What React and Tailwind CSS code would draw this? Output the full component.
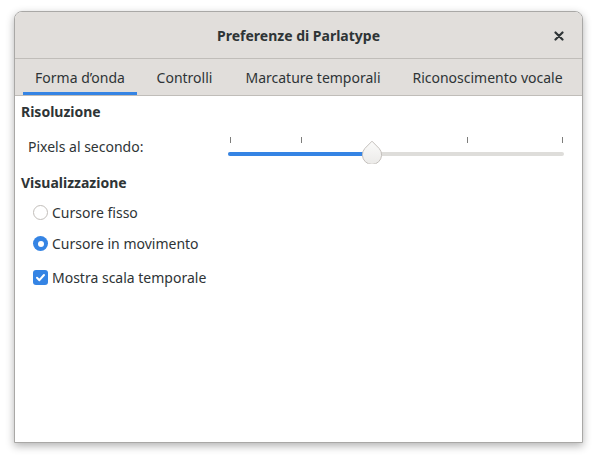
import React from "react";

const font = { fontFamily: '"Noto Sans", "Open Sans", sans-serif' };

function Tab({ label, width, active }) {
  return (
    <div
      className={`relative flex h-full items-center justify-center text-[14px] text-[#2e3436] ${width}`}
    >
      <span className="mt-[1px]">{label}</span>
      {active && (
        <div className="absolute bottom-0 left-0 right-0 h-[3px] bg-[#3584e4]" />
      )}
    </div>
  );
}

function Slider() {
  const ticks = [2, 73, 239, 334];
  return (
    <div className="relative h-[32px] w-[336px]">
      {ticks.map((t) => (
        <div
          key={t}
          className="absolute top-[7px] h-[6px] w-[1px] bg-[#7d7d7b]"
          style={{ left: t }}
        />
      ))}
      <div className="absolute left-0 right-0 top-[22px] h-[4px] rounded-full bg-[#deddda]" />
      <div className="absolute left-0 top-[22px] h-[4px] w-[146px] rounded-full bg-[#3584e4]" />
      <svg
        className="absolute left-[133px] top-[10px]"
        width="22"
        height="24"
        viewBox="0 0 22 24"
      >
        <defs>
          <linearGradient id="kg" x1="0" y1="0" x2="0" y2="1">
            <stop offset="0" stopColor="#fbfbfa" />
            <stop offset="1" stopColor="#ebeae8" />
          </linearGradient>
        </defs>
        <path
          d="M11 1.2 L18.3 8.6 A9.6 9.6 0 1 1 3.7 8.6 Z"
          fill="url(#kg)"
          stroke="#c3bfbb"
          strokeWidth="1"
          strokeLinejoin="round"
        />
      </svg>
    </div>
  );
}

export default function App() {
  return (
    <div className="h-[459px] w-[597px] bg-white pl-[14px] pt-[11px]" style={font}>
      <div className="flex h-[432px] w-[569px] flex-col overflow-hidden rounded-t-[8px] border border-[#a9a8a6] bg-white shadow-[0_3px_9px_rgba(0,0,0,0.3)]">
        <div className="relative flex h-[47px] shrink-0 items-center justify-center border-b border-[#c0bdb9] bg-[#e1dedb]">
          <span className="text-[14px] font-bold text-[#2e3436]">Preferenze di Parlatype</span>
          <svg
            className="absolute right-[18px] top-[19px]"
            width="10"
            height="10"
            viewBox="0 0 10 10"
          >
            <path d="M1.5 1.5 L8.5 8.5 M8.5 1.5 L1.5 8.5" stroke="#2e3436" strokeWidth="2.2" strokeLinecap="round" />
          </svg>
        </div>
        <div className="flex h-[37px] shrink-0 border-b border-[#c0bdb9] bg-[#e1dedb] pl-[8px]">
          <Tab label="Forma d’onda" width="w-[114px]" active />
          <Tab label="Controlli" width="w-[95px]" />
          <Tab label="Marcature temporali" width="w-[162px]" />
          <Tab label="Riconoscimento vocale" width="w-[187px]" />
        </div>
        <div className="flex flex-col pl-[6px] pt-[4px] text-[14px] text-[#2e3436]">
          <div className="h-[24px] leading-[24px] font-bold">Risoluzione</div>
          <div className="mt-[6px] flex items-center">
            <span className="w-[207px] pl-[7px]">Pixels al secondo:</span>
            <Slider />
          </div>
          <div className="mt-[9px] h-[24px] leading-[24px] font-bold">Visualizzazione</div>
          <div className="mt-[7px] flex items-center pl-[12px]">
            <div className="h-[15px] w-[15px] rounded-full border border-[#c2beba] bg-white" />
            <span className="ml-[4px]">Cursore fisso</span>
          </div>
          <div className="mt-[10px] flex items-center pl-[12px]">
            <div className="flex h-[15px] w-[15px] items-center justify-center rounded-full bg-[#3584e4]">
              <div className="h-[6px] w-[6px] rounded-full bg-white" />
            </div>
            <span className="ml-[4px]">Cursore in movimento</span>
          </div>
          <div className="mt-[13px] flex items-center pl-[12px]">
            <div className="flex h-[15px] w-[15px] items-center justify-center rounded-[3px] bg-[#3584e4]">
              <svg width="11" height="11" viewBox="0 0 11 11">
                <path d="M2 5.8 L4.4 8.2 L9 3" fill="none" stroke="white" strokeWidth="2" strokeLinecap="round" strokeLinejoin="round" />
              </svg>
            </div>
            <span className="ml-[4px]">Mostra scala temporale</span>
          </div>
        </div>
      </div>
    </div>
  );
}
